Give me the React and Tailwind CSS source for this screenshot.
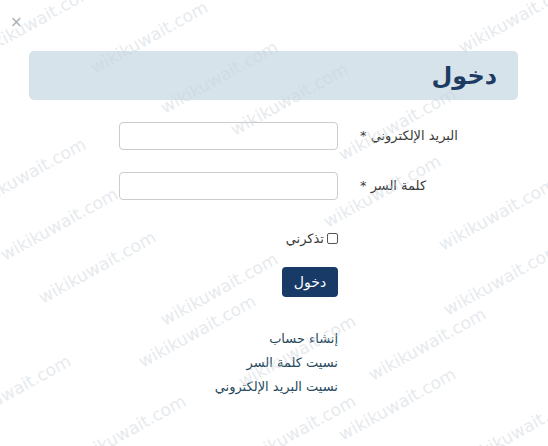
import React from "react";

const marks = [
  [152, 38], [222, 78], [292, 100], [520, 18], [38, 22], [400, 125], [385, 192],
  [30, 175], [62, 225], [100, 268], [222, 290], [500, 215], [505, 280],
  [200, 332], [300, 352], [430, 345], [15, 392], [400, 405], [130, 432], [300, 432], [525, 430],
];

export default function App() {
  return (
    <div
      className="relative w-[548px] h-[446px] overflow-hidden bg-white"
      style={{ fontFamily: '"DejaVu Sans", "Noto Sans", sans-serif' }}
    >
      <div className="absolute left-[10px] top-[15px] text-[15px] leading-none text-[#a9aeb3]">×</div>

      <div dir="rtl" className="ml-[29px] mr-[30px] pt-[51px]">
        <div className="h-[49px] rounded-[5px] bg-[#d6e3eb] flex items-center pr-[21px]">
          <h1 className="text-[24px] font-bold text-[#1d3b63] leading-none">دخول</h1>
        </div>

        <form className="mt-[22px] flex flex-col">
          <div className="flex items-center h-[28px]">
            <label className="w-[160px] text-left text-[13px] text-[#3a3a3a] pl-[2px]">البريد الإلكتروني *</label>
            <div className="mr-[20px]">
              <input className="block w-[219px] h-[28px] rounded-[4px] border border-[#cccccc] bg-white" />
            </div>
          </div>
          <div className="flex items-center h-[28px] mt-[22px]">
            <label className="w-[160px] text-left text-[13px] text-[#3a3a3a] pl-[2px]">كلمة السر *</label>
            <div className="mr-[20px]">
              <input type="password" className="block w-[219px] h-[28px] rounded-[4px] border border-[#cccccc] bg-white" />
            </div>
          </div>

          <div className="mr-[180px] mt-[32px] flex items-center gap-[3px] h-[12px]">
            <span className="inline-block w-[11px] h-[11px] rounded-[2px] border border-[#555] bg-white"></span>
            <span className="text-[13px] text-[#3a3a3a] leading-none">تذكرني</span>
          </div>

          <div className="mr-[180px] mt-[23px]">
            <button
              type="button"
              className="w-[56px] h-[30px] rounded-[4px] bg-[#173a66] text-white text-[14px] leading-none"
            >
              دخول
            </button>
          </div>

          <div className="mr-[180px] mt-[30px] flex flex-col text-[13px] leading-[24px] text-[#274a5e]">
            <a>إنشاء حساب</a>
            <a>نسيت كلمة السر</a>
            <a>نسيت البريد الإلكتروني</a>
          </div>
        </form>
      </div>

      <div className="pointer-events-none absolute inset-0">
        {marks.map(([x, y], i) => (
          <span
            key={i}
            className="absolute text-[17px] leading-none text-[#c9d2da] opacity-45 whitespace-nowrap"
            style={{ left: x - 68, top: y - 9, transform: "rotate(-29deg)" }}
          >
            wikikuwait.com
          </span>
        ))}
      </div>
    </div>
  );
}
